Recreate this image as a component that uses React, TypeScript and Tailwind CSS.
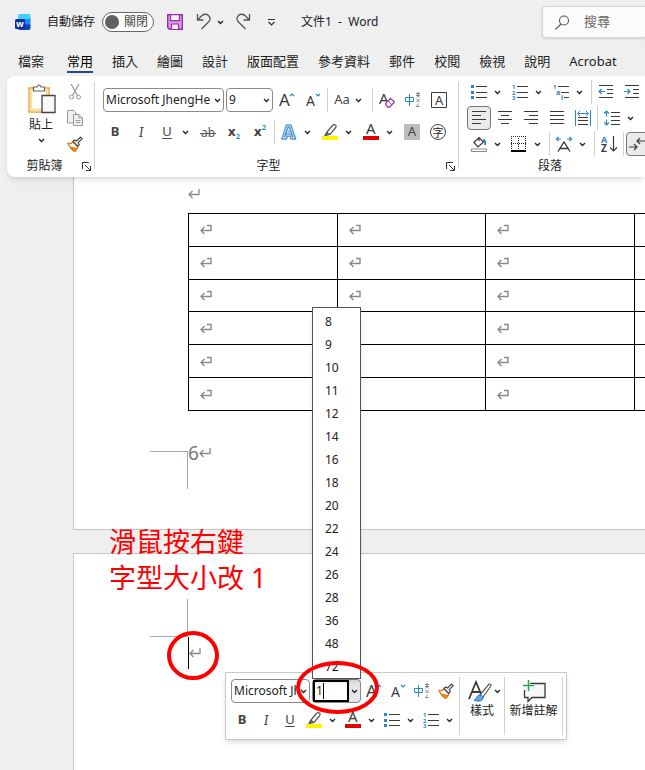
import type { ReactNode } from 'react'

const INK = '#3b3a39'
const BLUE = '#2b88c8'

const tabs = ['常用', '插入', '繪圖', '設計', '版面配置', '參考資料', '郵件', '校閱', '檢視', '說明', 'Acrobat']
const sizes = [8, 9, 10, 11, 12, 14, 16, 18, 20, 22, 24, 26, 28, 36, 48, 72]
const rows = [0, 1, 2, 3, 4, 5]
const cols = [0, 1, 2, 3]

interface IconProps {
  w?: number
  h?: number
  children: ReactNode
}

function Icon({ w = 16, h = 16, children }: IconProps) {
  return (
    <svg width={w} height={h} viewBox={`0 0 ${w} ${h}`} fill="none" stroke={INK} className="block shrink-0" aria-hidden="true">
      {children}
    </svg>
  )
}

function Letter({ x, y, size, fill = INK, bold, children }: { x: number; y: number; size: number; fill?: string; bold?: boolean; children: ReactNode }) {
  return (
    <text x={x} y={y} fontSize={size} fill={fill} stroke="none" fontWeight={bold ? 700 : 400}>
      {children}
    </text>
  )
}

function Chevron() {
  return (
    <Icon w={7} h={5}>
      <path d="M1 1l2.5 2.5L6 1" stroke="#222" strokeWidth="1.3" />
    </Icon>
  )
}

function Tool({ label, active, children }: { label: string; active?: boolean; children: ReactNode }) {
  return (
    <button
      type="button"
      aria-label={label}
      className={
        active
          ? 'flex h-6 w-6 shrink-0 items-center justify-center rounded border border-[#777] bg-[#ebebeb]'
          : 'flex h-6 w-6 shrink-0 items-center justify-center'
      }
    >
      {children}
    </button>
  )
}

function SplitTool({ label, children }: { label: string; children: ReactNode }) {
  return (
    <div className="flex shrink-0">
      <Tool label={label}>{children}</Tool>
      <button type="button" aria-label={`${label}選項`} className="flex h-6 w-3 items-center justify-center">
        <Chevron />
      </button>
    </div>
  )
}

function Divider() {
  return <div className="mx-[2px] h-6 w-px shrink-0 bg-[#d0d0d0]" />
}

function Combo({ label, value, className }: { label: string; value: string; className: string }) {
  return (
    <div className={`flex h-6 shrink-0 items-center gap-1 rounded border border-[#8a8a8a] bg-white px-[2px] ${className}`}>
      <select aria-label={label} className="min-w-0 flex-1 appearance-none overflow-hidden bg-transparent text-[12px] leading-5 text-[#222]">
        <option>{value}</option>
      </select>
      <Chevron />
    </div>
  )
}

const GrowFont = () => (
  <Icon>
    <Letter x={0} y={14} size={17}>A</Letter>
    <path d="M11 4l2-2 2 2" stroke={BLUE} strokeWidth="1.2" />
  </Icon>
)

const ShrinkFont = () => (
  <Icon>
    <Letter x={1} y={14} size={14}>A</Letter>
    <path d="M11 2l2 2 2-2" stroke={BLUE} strokeWidth="1.2" />
  </Icon>
)

const Phonetic = () => (
  <Icon>
    <path d="M.5 5.5h8v4h-8zM4.500 2v12" stroke={BLUE} />
    <path d="M11 1.500h4M11 3.500h4M13 0v5M11.500 5.500l1-1M14.500 5.500l-1-1M11.500 7l3 3M14.500 7l-3 3M13.500 11.500l-2 3h3" stroke="#777" strokeWidth=".9" />
  </Icon>
)

const Painter = () => (
  <Icon>
    <path d="M1 7.500c2 .5 3.500 0 5-1.500l5 5c-1 1.500-1.500 3-3.500 4.500C5 14 3 12 1 7.500z" fill="#fff" stroke="#e07a10" strokeWidth="1.300" />
    <path d="M3 11l5 4.500 2-3z" fill="#f08a24" stroke="#e07a10" />
    <path d="M6 5.500l1.500-1.500 2 1L13.500 1l1.700 1.700-4 4 1 2-1.500 1.500z" fill="#fff" stroke="#444" strokeWidth="1.200" />
  </Icon>
)

const Highlighter = () => (
  <Icon w={18} h={18}>
    <path d="M6 9l5.500-6.500c1-1 2-1.200 3-.5.9.8.8 2-.2 3L9 11.500H6.500L4 12.500z" fill="#fff" stroke="#555" strokeWidth="1.200" />
    <path d="M6 9l3 2.500L4 12.500z" fill="#666" stroke="#555" />
    <path d="M1 15h16" stroke="#fff500" strokeWidth="4" />
  </Icon>
)

const FontColor = () => (
  <Icon w={18} h={18}>
    <Letter x={4} y={11} size={15}>A</Letter>
    <path d="M1 15h16" stroke="#e00000" strokeWidth="4" />
  </Icon>
)

const Bullets = () => (
  <Icon>
    <path d="M0 1h3v3H0zM0 7h3v3H0zM0 12h3v3H0z" fill={BLUE} stroke="none" />
    <path d="M5 2.500h11M5 8.500h11M5 13.500h11" />
  </Icon>
)

const Numbering = () => (
  <Icon>
    <path d="M5 2.500h11M5 8.500h11M5 13.500h11" />
    <Letter x={0} y={5} size={6} bold fill={BLUE}>1</Letter>
    <Letter x={0} y={11} size={6} bold fill={BLUE}>2</Letter>
    <Letter x={0} y={16} size={6} bold fill={BLUE}>3</Letter>
  </Icon>
)

const Mark = () => (
  <Icon w={12} h={11}>
    <path d="M11 0v5.500H1M4.500 2L1 5.500 4.500 9" stroke="#8a8a8a" strokeWidth="1.300" />
  </Icon>
)

const CellMark = () => (
  <Icon w={12} h={11}>
    <path d="M7 1.500h4v5H1M4.500 3L1 6.500 4.500 10" stroke="#8a8a8a" strokeWidth="1.400" />
  </Icon>
)

function Launcher({ label }: { label: string }) {
  return (
    <button type="button" aria-label={label} className="flex h-4 w-4 shrink-0 items-center justify-center">
      <Icon w={9} h={9}>
        <path d="M.5 7V.5H7M3 3l5 5M8.500 4v4.500H4" stroke="#333" />
      </Icon>
    </button>
  )
}

function TitleBar() {
  return (
    <div className="flex h-11 items-center text-[12px] text-[#222]">
      <svg width="16" height="16" viewBox="0 0 16 16" className="ml-[15px] shrink-0" aria-hidden="true">
        <path d="M3 1.500Q3 0 4.500 0H14q1.500 0 1.500 1.500V6H3z" fill="#41d0fb" />
        <path d="M3 5h12.500v6H3z" fill="#1b8cf0" />
        <path d="M3 10.500h12.500V14q0 2-1.500 2H4.500Q3 16 3 14z" fill="#0a45c4" />
        <rect y="5" width="10" height="10" rx="1.500" fill="#0b2f9c" />
        <text x="1" y="13" fontSize="9" fontWeight="700" fill="#fff">w</text>
      </svg>
      <label htmlFor="autosave" className="ml-4 shrink-0">自動儲存</label>
      <button
        id="autosave"
        type="button"
        role="switch"
        aria-checked="false"
        className="ml-[7px] flex h-5 w-[52px] shrink-0 items-center gap-[5px] rounded-full border border-[#666] bg-white pl-[2px] text-[#444]"
      >
        <span className="h-[14px] w-[14px] rounded-full bg-[#616161]" />
        關閉
      </button>
      <button type="button" aria-label="儲存" className="ml-[13px]">
        <Icon>
          <path d="M.7.7h14.600v14.600H2.500L.7 13.500z" fill="#d99be3" stroke="#9332a8" strokeWidth="1.400" />
          <path d="M3.500.7h9v6h-9zM4.500 15v-5h7v5" fill="#f8f0fa" stroke="#9332a8" strokeWidth="1.200" />
        </Icon>
      </button>
      <button type="button" aria-label="復原" className="ml-[13px]">
        <Icon w={16} h={18}>
          <path d="M1.500 1v6h6M1.500 7l4-4c2-2 5-2.500 7-.5s2 4.500 0 6.500L5.500 16" stroke="#555" strokeWidth="1.300" />
        </Icon>
      </button>
      <button type="button" aria-label="復原選項" className="ml-[5px]">
        <Chevron />
      </button>
      <button type="button" aria-label="重做" className="ml-[11px]">
        <Icon w={16} h={18}>
          <path d="M14.500 1v6h-6M14.500 7l-4-4c-2-2-5-2.500-7-.5s-2 4.500 0 6.500l7 7" stroke="#555" strokeWidth="1.300" />
        </Icon>
      </button>
      <button type="button" aria-label="自訂快速存取工具列" className="ml-4">
        <Icon w={9} h={8}>
          <path d="M1 1.500h7M1.500 4l3 3 3-3" stroke="#333" strokeWidth="1.200" />
        </Icon>
      </button>
      <h1 className="ml-[25px] shrink-0 whitespace-pre">文件1  -  Word</h1>
      <div className="ml-auto flex h-8 w-[103px] shrink-0 items-center rounded-l border border-r-0 border-[#d5d5d5] bg-[#fbfbfb] pl-3 shadow-sm">
        <Icon w={15} h={15}>
          <circle cx="9" cy="5.500" r="4.500" stroke="#555" strokeWidth="1.100" />
          <path d="M6 9l-5.500 5.500" stroke="#555" strokeWidth="1.100" />
        </Icon>
        <input type="search" aria-label="搜尋" placeholder="搜尋" className="ml-[14px] min-w-0 flex-1 bg-transparent text-[13px] placeholder:text-[#666]" />
      </div>
    </div>
  )
}

function ClipboardGroup() {
  return (
    <section aria-label="剪貼簿" className="flex w-[87px] shrink-0 flex-col pl-1">
      <div className="flex h-[78px] pl-[14px]">
        <button type="button" className="flex w-8 flex-col items-center pt-[3px] text-[12px] leading-5">
          <Icon w={30} h={32}>
            <path d="M3 5h20v24H3z" fill="#fff" stroke="#e8a33d" strokeWidth="1.500" />
            <path d="M5 7h16v20H5z" stroke="#fadf9e" strokeWidth="2.500" />
            <path d="M7.500 8V4h3.500q2-4 4 0h3.500v4z" fill="#fff" stroke="#666" strokeWidth="1.200" />
            <path d="M16 12.500h13v17H16z" fill="#f8f8f8" stroke="#444" strokeWidth="1.300" />
          </Icon>
          貼上
          <span className="pt-[3px]">
            <Chevron />
          </span>
        </button>
        <div className="ml-[6px] flex flex-col gap-[2px]">
          <Tool label="剪下">
            <Icon>
              <path d="M4 0l6.500 11.500M12 0L5.500 11.500" stroke="#999" strokeWidth="1.200" />
              <circle cx="4.500" cy="13" r="2" stroke="#999" />
              <circle cx="11.500" cy="13" r="2" stroke="#999" />
            </Icon>
          </Tool>
          <Tool label="複製">
            <Icon>
              <path d="M.5.500h6l2.500 2.500v10H.5z" fill="#f1f1f1" stroke="#999" />
              <path d="M6.500 4.500h5.500l3.500 3.500v7.500h-9zM12 4.500V8h3.500M8.500 10.500h5M8.500 12.500h5" fill="#f1f1f1" stroke="#999" />
            </Icon>
          </Tool>
          <Tool label="複製格式">
            <Painter />
          </Tool>
        </div>
      </div>
      <div className="flex h-4 items-center text-[12px]">
        <span className="flex-1 text-center">剪貼簿</span>
        <Launcher label="剪貼簿設定" />
      </div>
    </section>
  )
}

function FontGroup() {
  return (
    <section aria-label="字型" className="flex w-[363px] shrink-0 flex-col">
      <div className="flex h-[78px] flex-col gap-2 pt-2 pl-2">
        <div className="flex items-center">
          <Combo label="字型名稱" value="Microsoft JhengHei" className="w-[121px]" />
          <Combo label="字型大小" value="9" className="ml-[2px] w-[47px]" />
          <div className="ml-[2px] flex gap-[2px]">
            <Tool label="放大字型"><GrowFont /></Tool>
            <Tool label="縮小字型"><ShrinkFont /></Tool>
          </div>
          <Divider />
          <button type="button" aria-label="大小寫轉換" className="flex h-6 w-10 items-center justify-center gap-[5px] pr-1 text-[13px] text-[#444]">
            Aa
            <Chevron />
          </button>
          <Divider />
          <div className="flex gap-[2px]">
            <Tool label="清除格式">
              <Icon>
                <Letter x={0} y={12} size={15}>A</Letter>
                <path d="M6.500 11.500l5-5L15.500 10l-5 5h-2z" fill="#fff" stroke="#a23cb8" strokeWidth="1.300" />
                <path d="M9 9l3.500 3.500" stroke="#a23cb8" />
              </Icon>
            </Tool>
            <Tool label="注音標示"><Phonetic /></Tool>
            <Tool label="圍繞字元">
              <Icon>
                <path d="M.5.500h15v15H.5z" />
                <Letter x={4} y={13} size={13}>A</Letter>
              </Icon>
            </Tool>
          </div>
        </div>
        <div className="flex items-center">
          <div className="flex gap-[2px]">
            <Tool label="粗體"><span className="text-[13px] font-bold text-[#444]">B</span></Tool>
            <Tool label="斜體"><span className="font-serif text-[14px] text-[#444] italic">I</span></Tool>
            <SplitTool label="底線"><span className="text-[13px] text-[#444] underline underline-offset-2">U</span></SplitTool>
          </div>
          <div className="ml-[5px] flex gap-[2px]">
            <Tool label="刪除線">
              <Icon>
                <Letter x={1} y={13} size={12} fill="#555">ab</Letter>
                <path d="M0 9.500h16" stroke="#555" />
              </Icon>
            </Tool>
            <Tool label="下標">
              <Icon>
                <Letter x={2} y={12} size={13} bold>x</Letter>
                <Letter x={10} y={15} size={7} bold fill={BLUE}>2</Letter>
              </Icon>
            </Tool>
            <Tool label="上標">
              <Icon>
                <Letter x={2} y={12} size={13} bold>x</Letter>
                <Letter x={10} y={6} size={7} bold fill={BLUE}>2</Letter>
              </Icon>
            </Tool>
          </div>
          <Divider />
          <div className="flex gap-[5px]">
            <SplitTool label="文字效果">
              <Icon>
                <text x="2" y="14" fontSize="16" fontWeight="700" fill="#1d74bd" stroke="#1d74bd" strokeWidth="3">A</text>
                <text x="2" y="14" fontSize="16" fontWeight="700" fill="#1d74bd" stroke="#d8ecfb" strokeWidth="1">A</text>
              </Icon>
            </SplitTool>
            <SplitTool label="文字醒目提示色彩"><Highlighter /></SplitTool>
            <SplitTool label="字型色彩"><FontColor /></SplitTool>
          </div>
          <div className="ml-[5px] flex gap-[2px]">
            <Tool label="字元網底"><span className="flex h-4 w-4 items-center justify-center bg-[#bdbdbd] text-[13px] text-[#444]">A</span></Tool>
            <Tool label="圍繞字"><span className="flex h-4 w-4 items-center justify-center rounded-full border border-[#444] text-[11px] leading-none">字</span></Tool>
          </div>
        </div>
      </div>
      <div className="flex h-4 items-center text-[12px]">
        <span className="flex-1 text-center">字型</span>
        <Launcher label="字型設定" />
      </div>
    </section>
  )
}

function ParagraphGroup() {
  return (
    <section aria-label="段落" className="flex w-[198px] shrink-0 flex-col">
      <div className="flex h-[78px] flex-col gap-[2px] pl-2">
        <div className="flex items-center">
          <div className="flex gap-[5px]">
            <SplitTool label="項目符號"><Bullets /></SplitTool>
            <SplitTool label="編號"><Numbering /></SplitTool>
            <SplitTool label="多層次清單">
              <Icon>
                <path d="M5 2.500h11M8 8.500h8M11 13.500h5" />
                <Letter x={0} y={5} size={6} bold fill={BLUE}>1</Letter>
                <Letter x={3} y={11} size={7} bold fill={BLUE}>a</Letter>
                <Letter x={8} y={16} size={7} bold fill={BLUE}>i</Letter>
              </Icon>
            </SplitTool>
          </div>
          <div className="ml-1"><Divider /></div>
          <Tool label="減少縮排">
            <Icon>
              <path d="M1 1.500h14M9 5.500h6M9 9.500h6M1 13.500h14" />
              <path d="M7 7.500H1M3.500 5L1 7.500 3.500 10" stroke={BLUE} strokeWidth="1.200" />
            </Icon>
          </Tool>
          <div className="ml-[2px]">
            <Tool label="增加縮排">
              <Icon>
                <path d="M1 1.500h14M9 5.500h6M9 9.500h6M1 13.500h14" />
                <path d="M0 7.500h6M3.500 5L6 7.500 3.500 10" stroke={BLUE} strokeWidth="1.200" />
              </Icon>
            </Tool>
          </div>
        </div>
        <div className="flex items-center">
          <div className="flex gap-[2px]">
            <Tool label="靠左對齊" active>
              <Icon><path d="M1 1.500h14M1 5.500h9M1 9.500h14M1 13.500h9" /></Icon>
            </Tool>
            <Tool label="置中">
              <Icon><path d="M1 1.500h14M4 5.500h8M1 9.500h14M4 13.500h8" /></Icon>
            </Tool>
            <Tool label="靠右對齊">
              <Icon><path d="M1 1.500h14M6 5.500h9M1 9.500h14M6 13.500h9" /></Icon>
            </Tool>
            <Tool label="左右對齊">
              <Icon><path d="M1 1.500h14M1 5.500h14M1 9.500h14M1 13.500h14" /></Icon>
            </Tool>
            <Tool label="分散對齊">
              <Icon>
                <path d="M3 7.500h10M3 10.500h10M3 14.500h10" />
                <path d="M.5 0v16M15.500 0v16M3 3.500h10M5 1L2.500 3.500 5 6M11 1l2.500 2.500L11 6" stroke={BLUE} />
              </Icon>
            </Tool>
          </div>
          <Divider />
          <SplitTool label="行距">
            <Icon>
              <path d="M7 2.500h9M7 6.500h9M7 10.500h9M7 14.500h9" />
              <path d="M2.500 1v5.500M0 3.500L2.500 1 5 3.500M2.500 9.500V15M0 12.500L2.500 15 5 12.500" stroke={BLUE} strokeWidth="1.200" />
            </Icon>
          </SplitTool>
        </div>
        <div className="flex items-center">
          <div className="flex gap-1">
            <SplitTool label="網底">
              <Icon>
                <path d="M3 6.500L8 1.500l4.500 4.500L7 11zM8 1.500V5" strokeWidth="1.200" />
                <path d="M12 4c2 0 2.500 2 2 5" stroke={BLUE} strokeWidth="2" />
                <path d="M.5 13h15v2.500H.5z" stroke="#888" />
              </Icon>
            </SplitTool>
            <SplitTool label="框線">
              <Icon>
                <path d="M0 .500h15M0 7.500h15M.5 2v12M7.500 2v12M14.500 2v12" strokeDasharray="1 1" stroke="#222" />
                <path d="M0 15h15" stroke="#000" strokeWidth="2" />
              </Icon>
            </SplitTool>
          </div>
          <div className="ml-1"><Divider /></div>
          <SplitTool label="亞洲方式配置">
            <Icon w={18}>
              <path d="M3 15.500L9 6l6 9.500M5 12.500h8" strokeWidth="1.400" />
              <path d="M6 3H1.500M3.500 1l-2 2 2 2M12 3h4.500M14.500 1l2 2-2 2" stroke={BLUE} strokeWidth="1.200" />
            </Icon>
          </SplitTool>
          <div className="ml-1"><Divider /></div>
          <Tool label="排序">
            <Icon w={17} h={18}>
              <Letter x={0} y={8} size={9} bold fill={BLUE}>A</Letter>
              <Letter x={0} y={17} size={10} bold>Z</Letter>
              <path d="M12.500 1v15M9 12.500l3.500 3.500 3.500-3.500" strokeWidth="1.200" />
            </Icon>
          </Tool>
          <Divider />
          <Tool label="顯示編輯標記" active>
            <Icon w={18}>
              <path d="M17 5H8M11 2L8 5l3 3M0 11h8M5 8l3 3-3 3" strokeWidth="1.200" />
            </Icon>
          </Tool>
        </div>
      </div>
      <div className="flex h-4 items-center text-[12px]">
        <span className="flex-1 text-center">段落</span>
        <Launcher label="段落設定" />
      </div>
    </section>
  )
}

function SizeList() {
  return (
    <ul
      role="listbox"
      aria-label="字型大小"
      className="absolute bottom-full -left-px mb-px h-[372px] w-[49px] overflow-hidden border border-[#555] bg-white pt-[2px] text-[12px] leading-[23px] text-[#222] shadow-md"
    >
      {sizes.map((size) => (
        <li key={size} role="option" aria-selected="false" className="pl-3">
          {size}
        </li>
      ))}
    </ul>
  )
}

function MiniToolbar() {
  return (
    <div role="toolbar" aria-label="迷你工具列" className="absolute top-[672px] left-[225px] flex h-[68px] w-[342px] border border-[#c8c8c8] bg-white pt-[6px] pl-[5px] shadow-md">
      <div className="flex w-[228px] shrink-0 flex-col gap-[5px]">
        <div className="flex">
          <Combo label="迷你字型名稱" value="Microsoft JhengHei" className="w-[79px]" />
          <div className="relative ml-[2px] flex h-6 w-[49px] shrink-0 rounded border border-[#888] bg-[#e6e6e6]">
            <label className="flex w-[36px] items-center border-2 border-black bg-white pl-px">
              <input aria-label="大小" defaultValue="1" className="w-[7px] text-[12px]" />
              <span className="h-4 w-px bg-black" />
            </label>
            <button type="button" aria-label="展開大小" className="flex flex-1 items-center justify-center">
              <Chevron />
            </button>
            <SizeList />
          </div>
          <div className="ml-px flex">
            <Tool label="放大字型"><GrowFont /></Tool>
            <Tool label="縮小字型"><ShrinkFont /></Tool>
            <Tool label="注音標示"><Phonetic /></Tool>
            <Tool label="複製格式"><Painter /></Tool>
          </div>
        </div>
        <div className="-ml-px flex gap-[3px]">
          <div className="flex">
            <Tool label="粗體"><span className="text-[13px] font-bold text-[#444]">B</span></Tool>
            <Tool label="斜體"><span className="font-serif text-[14px] text-[#444] italic">I</span></Tool>
            <Tool label="底線"><span className="text-[13px] text-[#444] underline underline-offset-2">U</span></Tool>
            <SplitTool label="醒目提示"><Highlighter /></SplitTool>
          </div>
          <SplitTool label="字型色彩"><FontColor /></SplitTool>
          <SplitTool label="項目符號"><Bullets /></SplitTool>
          <SplitTool label="編號"><Numbering /></SplitTool>
        </div>
      </div>
      <div className="-mt-[2px] flex h-[58px] text-[12px] leading-4">
        <button type="button" className="flex w-[45px] flex-col items-center border-l border-[#d0d0d0] pt-[2px]">
          <span className="flex items-center gap-[2px] pl-1">
            <Icon w={24} h={24}>
              <path d="M1 20L8 3l6 14M4 13h8" strokeWidth="1.800" />
              <path d="M12 16L21 5q3 0 1.500 2.500L15 18z" fill="#fff" stroke="#555" strokeWidth="1.200" />
              <path d="M6 21c3 0 2-5 6-5 3 0 4 3 2 5-2 1.500-5 1.500-8 0z" fill="#5ea5ea" stroke="#2673c0" />
            </Icon>
            <Chevron />
          </span>
          樣式
        </button>
        <button type="button" className="flex w-[59px] flex-col items-center border-x border-[#d0d0d0] pt-[2px]">
          <Icon w={24} h={24}>
            <path d="M7 4.500h16v14H10l-4 4v-4H2.500V11" fill="#f7f7f7" strokeWidth="1.300" />
            <path d="M6.500 1v11M1 6.500h11" stroke="#fff" strokeWidth="3" />
            <path d="M6.500 1v11M1 6.500h11" stroke="#23a455" strokeWidth="1.500" />
          </Icon>
          <span className="whitespace-nowrap">新增註解</span>
        </button>
      </div>
    </div>
  )
}

export default function App() {
  return (
    <div className="relative flex h-screen flex-col overflow-hidden bg-[#efefef] font-['Noto_Sans','Noto_Sans_CJK_TC',sans-serif] text-[#222]">
      <header>
        <TitleBar />
        <nav className="flex h-8 items-end gap-[19px] pb-[3px] pl-[18px] text-[13px] leading-5 whitespace-nowrap">
          <a href="#file" className="mr-1 border-b-2 border-transparent">檔案</a>
          {tabs.map((tab) => (
            <a
              key={tab}
              href={`#${tab}`}
              className={tab === '常用' ? 'border-b-2 border-[#1f4e85] text-black' : 'border-b-2 border-transparent'}
            >
              {tab}
            </a>
          ))}
        </nav>
        <div className="relative ml-[7px] flex h-[101px] overflow-hidden rounded-l-lg bg-white pt-1 shadow-md">
          <ClipboardGroup />
          <div className="mt-[2px] mb-2 w-px shrink-0 bg-[#d0d0d0]" />
          <FontGroup />
          <div className="mt-[2px] mb-2 w-px shrink-0 bg-[#d0d0d0]" />
          <ParagraphGroup />
        </div>
      </header>

      <main className="ml-[73px] flex flex-1 flex-col gap-[23px]">
        <article className="h-[353px] shrink-0 overflow-hidden border-b border-l border-[#c6c6c6] bg-white">
          <div className="pt-3 pl-[114px]">
            <Mark />
            <table className="mt-[13px] h-[198px] w-[595px] table-fixed border-collapse">
              <tbody>
                {rows.map((row) => (
                  <tr key={row}>
                    {cols.map((col) => (
                      <td key={col} className="border border-black p-0 pl-[11px]">
                        <CellMark />
                      </td>
                    ))}
                  </tr>
                ))}
              </tbody>
            </table>
          </div>
          <div className="mt-10 flex pl-[76px]">
            <div className="h-[38px] w-[38px] border-t border-r border-[#a6a6a6]" />
            <p className="flex h-1 items-center text-[19px] text-[#777]">
              6
              <Mark />
            </p>
          </div>
        </article>

        <article className="flex-1 border-t border-l border-[#c6c6c6] bg-white pt-[45px] pl-[76px]">
          <div className="h-[38px] w-[38px] border-r border-b border-[#a6a6a6]" />
          <div className="flex h-8 items-center pl-[38px]">
            <span className="h-8 w-px bg-black" />
            <Mark />
          </div>
        </article>
      </main>

      <p className="absolute top-[524px] left-[109px] text-[27px] leading-9 text-[#ff0000]">
        滑鼠按右鍵
        <br />
        字型大小改 1
      </p>
      <MiniToolbar />
      <div className="absolute top-[631px] left-[167px] h-[49px] w-[52px] rounded-[50%] border-4 border-[#ff0000]" />
      <div className="absolute top-[661px] left-[296px] h-[53px] w-[83px] rounded-[50%] border-4 border-[#ff0000]" />
    </div>
  )
}
